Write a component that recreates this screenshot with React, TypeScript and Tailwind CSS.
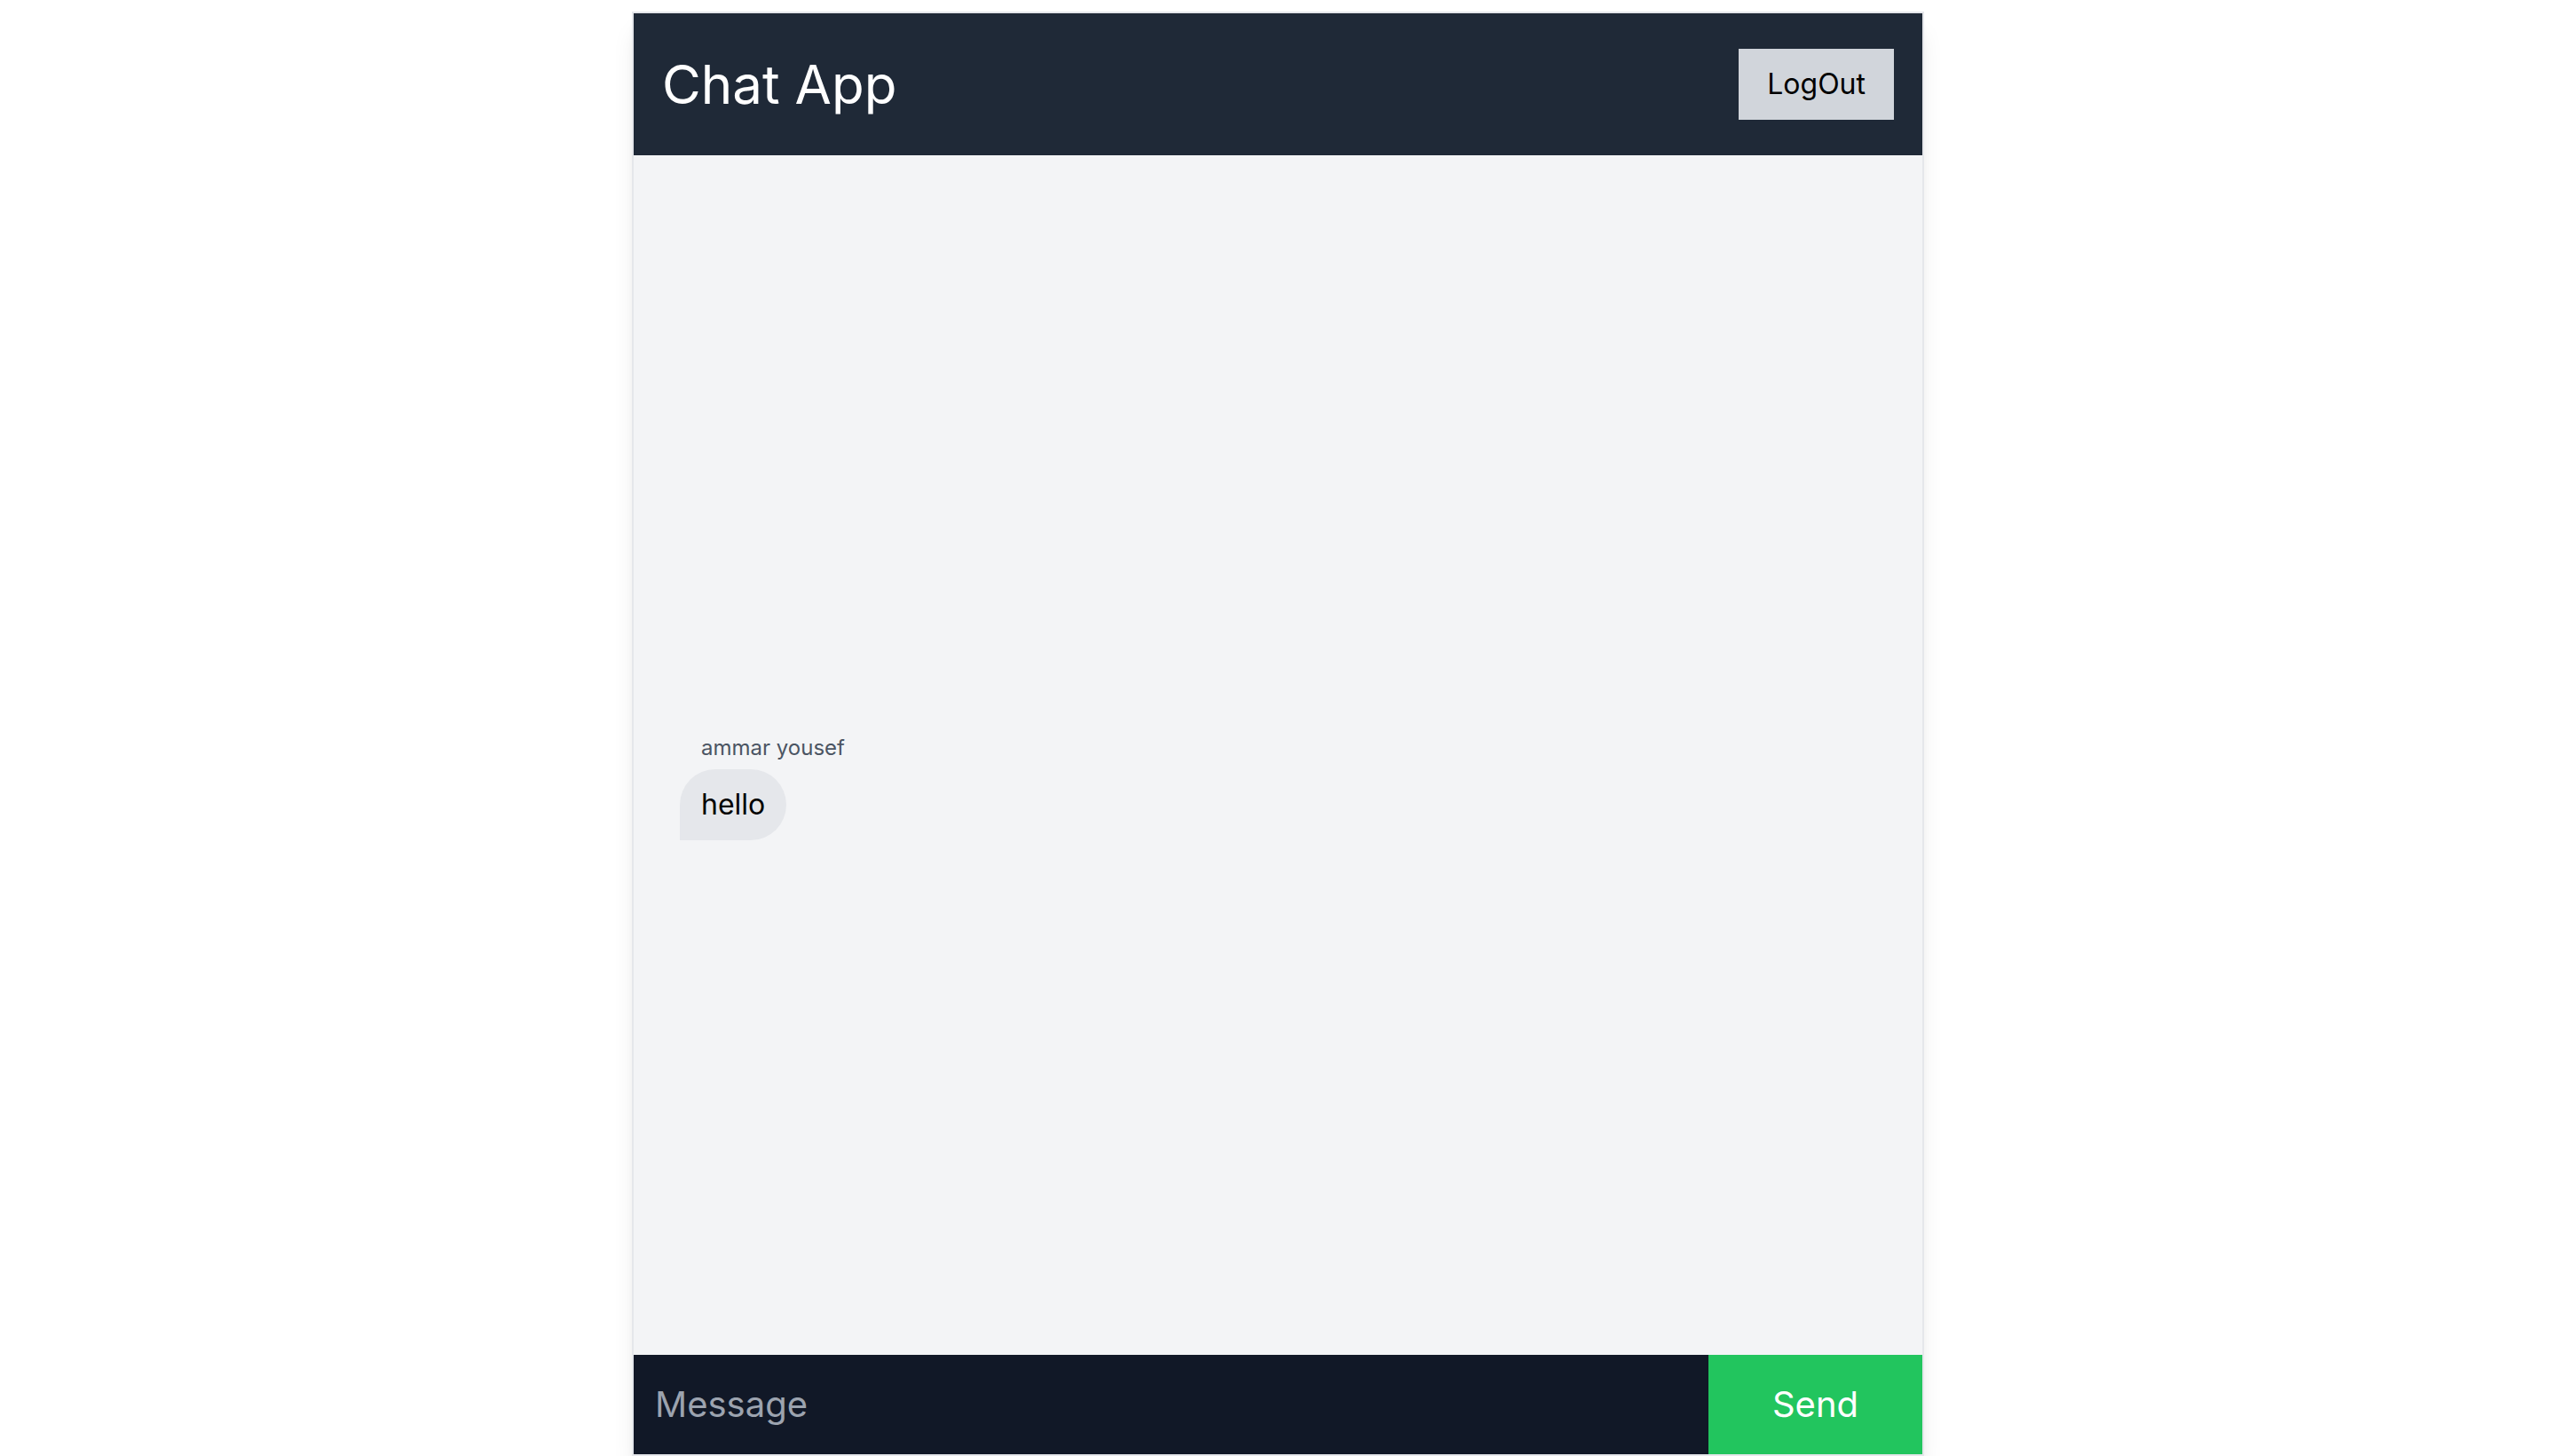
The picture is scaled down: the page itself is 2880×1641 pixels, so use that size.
import { useState } from "react";

type Message = {
  id: string;
  author: string;
  text: string;
};

const messages: Message[] = [{ id: "1", author: "ammar yousef", text: "hello" }];

export default function App() {
  const [draft, setDraft] = useState("");

  return (
    <div
      className="h-[1641px] overflow-hidden bg-white pt-[13px]"
      style={{ fontFamily: "Inter, 'Noto Sans', sans-serif" }}
    >
      <div className="mx-auto flex h-[1628px] w-[1456px] flex-col border-2 border-[#e5e7eb] bg-[#f3f4f6] shadow-xl">
        <header className="flex h-[160px] shrink-0 items-center justify-between bg-[#1f2937] pl-[32px] pr-[32px]">
          <h1 className="text-[60px] leading-[72px] text-white">Chat App</h1>
          <button className="bg-[#d1d5db] px-8 py-4 text-[32px] leading-[48px] text-black">
            LogOut
          </button>
        </header>

        <div className="flex flex-1 flex-col gap-4 overflow-y-auto pl-[52px] pt-[652px]">
          {messages.map((m) => (
            <div key={m.id} className="flex flex-col items-start">
              <span className="mb-2 pl-[24px] text-[24px] leading-[32px] text-[#4b5563]">
                {m.author}
              </span>
              <p className="rounded-[40px] rounded-bl-none bg-[#e5e7eb] px-6 py-4 text-[32px] leading-[48px] text-black">
                {m.text}
              </p>
            </div>
          ))}
        </div>

        <form
          className="flex h-[112px] shrink-0"
          onSubmit={(e) => {
            e.preventDefault();
            setDraft("");
          }}
        >
          <input
            value={draft}
            onChange={(e) => setDraft(e.target.value)}
            placeholder="Message"
            className="min-w-0 flex-1 bg-[#111827] px-6 text-[40px] text-white placeholder:text-[#9ca3af] focus:outline-none"
          />
          <button
            type="submit"
            className="w-[241px] bg-[#22c55e] text-[40px] text-white"
          >
            Send
          </button>
        </form>
      </div>
    </div>
  );
}
